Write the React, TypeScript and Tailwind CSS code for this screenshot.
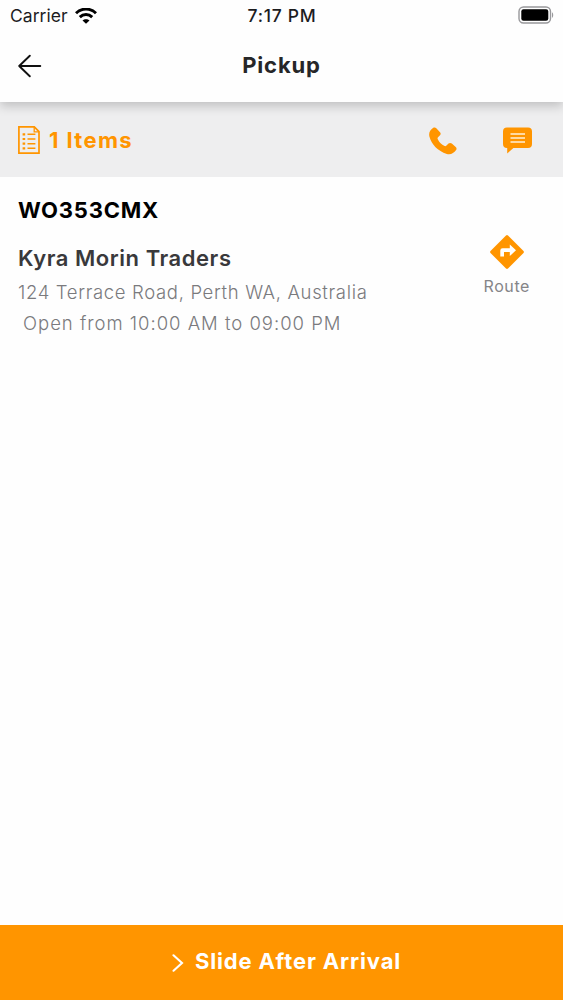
import React from "react"

function StatusBar() {
  return (
    <div className="grid grid-cols-3 items-center h-8 pl-[10px] pr-[9px] text-[17.5px] leading-8 text-[#1c1c1e]">
      <div className="flex items-center gap-[7px]">
        <span className="tracking-[0.05px]">Carrier</span>
        <svg className="w-[22px] h-4" viewBox="0 0 22 16" fill="none" stroke="#000" strokeWidth="3">
          <path d="M1 5.3C6.6 -0.3 15.4 -0.3 21 5.3" />
          <path d="M4.8 9.1C8.4 5.7 13.6 5.7 17.2 9.1" />
          <path d="M11 15.8L7.5 12.5C9.4 10.7 12.6 10.7 14.5 12.5Z" fill="#000" stroke="none" />
        </svg>
      </div>
      <span className="text-center font-medium tracking-[0.7px]">7:17 PM</span>
      <svg className="justify-self-end w-9 h-[18px] mt-[-2px]" viewBox="0 0 36 18">
        <rect x="1" y="1" width="31.5" height="16" rx="4.5" fill="#fff" stroke="#98989b" strokeWidth="1.4" />
        <rect x="3.3" y="3.3" width="27" height="11.4" rx="2.2" fill="#000" />
        <path d="M34 6.2C35.6 7 35.6 11 34 11.8Z" fill="#98989b" />
      </svg>
    </div>
  )
}

function Header() {
  return (
    <header className="relative z-10 bg-[#fefefe] h-[102px] shadow-[0_4px_10px_rgba(0,0,0,0.2)]">
      <StatusBar />
      <div className="grid grid-cols-3 items-center h-[68px] px-[18px]">
        <svg className="w-6 h-6" viewBox="0 0 24 24" fill="none" stroke="#111" strokeWidth="1.9" strokeLinecap="round" strokeLinejoin="round">
          <path d="M22.3 12H1.2M11.8 1.7L1.2 12L11.8 22.3" />
        </svg>
        <h1 className="-mt-0.5 text-center text-[22px] font-bold tracking-[0.85px] text-[#262628]">Pickup</h1>
      </div>
    </header>
  )
}

function ItemsBar() {
  return (
    <div className="flex items-center h-[75px] bg-[#eeeeef] pl-[18px] pr-[31px] text-[#ff9500]">
      <svg className="w-[22px] h-7 mt-px" viewBox="0 0 22 28" fill="none" stroke="currentColor" strokeWidth="1.7">
        <path d="M.9 .9H16.3L21 5.6V27.1H.9Z" />
        <path d="M16.2 1V5.8H21" strokeWidth="1.3" />
        <path d="M4.6 8.3H7.2M4.6 13H7.2M4.6 17.7H7.2M4.6 22.3H7.2" strokeWidth="2.2" />
        <path d="M9.5 8.3H17.4M9.5 13H17.4M9.5 17.7H17.4M9.5 22.3H17.4" strokeWidth="1.5" />
      </svg>
      <span className="ml-[9px] mt-0.5 text-[22px] font-bold tracking-[1.35px]">1 Items</span>
      <svg className="ml-auto w-7 h-7 mt-[3px]" viewBox="0 0 28 28" fill="currentColor">
        <path d="M4.3 .8C5.3 .2 6.5 .3 7.3 1.2L11 5.2C11.9 6.2 11.9 7.4 11 8.3L9 10.2C8.5 10.8 8.4 11.6 8.8 12.3C10.3 15.4 12.5 17.6 15.6 19C16.3 19.3 17 19.1 17.5 18.6L19.5 16.6C20.5 15.7 21.8 15.7 22.8 16.6L26.7 20C27.7 20.9 27.8 22 27.1 23C24.8 26.3 21.5 28 17.8 26.9C8.8 24 2.6 17.6 .4 9.5C-.4 6 .9 2.9 4.3 .8Z" />
      </svg>
      <svg className="ml-[46px] w-[29px] h-[27px] mt-0.5" viewBox="0 0 29 27">
        <path d="M4 .5H25Q29 .5 29 4.5V17Q29 21 25 21H10.4L4.2 26.5V21H4Q0 21 0 17V4.5Q0 .5 4 .5Z" fill="currentColor" />
        <path d="M7.5 7H22M7.5 11H22M7.5 15H22" stroke="#fff0d8" strokeWidth="1.7" />
      </svg>
    </div>
  )
}

function PickupDetails() {
  return (
    <main className="flex flex-1 justify-between pl-[18px] pr-[33px] pt-[18px]">
      <div className="whitespace-nowrap">
        <h2 className="text-[22px] leading-[30px] font-bold tracking-[0.8px] text-black">WO353CMX</h2>
        <h3 className="mt-[18px] text-[22px] leading-[30px] font-semibold tracking-[0.55px] text-[#39393b]">Kyra Morin Traders</h3>
        <p className="mt-1 text-[18.5px] leading-[30px] font-light tracking-[0.66px] text-[#7a7a7d]">124 Terrace Road, Perth WA, Australia</p>
        <p className="mt-px ml-[5px] text-[18.5px] leading-[30px] font-light tracking-[0.98px] text-[#7a7a7d]">Open from 10:00 AM to 09:00 PM</p>
      </div>
      <div className="flex flex-col items-center pt-10">
        <svg className="w-[34px] h-[34px]" viewBox="0 0 34 34">
          <path d="M16 .5Q17 -.3 18 .5L33.5 16Q34.3 17 33.5 18L18 33.5Q17 34.3 16 33.5L.5 18Q-.3 17 .5 16Z" fill="#ff9500" />
          <path d="M10.3 21.6V15.5Q10.3 13.2 12.6 13.2H19.8V9.5L26 15.3L19.8 21.1V17H14V21.6Z" fill="#fff" />
        </svg>
        <span className="mt-[5px] text-[16px] leading-6 tracking-[0.6px] text-[#858588]">Route</span>
      </div>
    </main>
  )
}

export default function App() {
  return (
    <div className="flex flex-col w-full h-[1000px] overflow-hidden bg-[#fefefe] font-['Inter','Liberation_Sans',sans-serif]">
      <Header />
      <ItemsBar />
      <PickupDetails />
      <button className="flex items-center justify-center h-[75px] w-full pl-[10px] bg-[#ff9500] text-white">
        <svg className="w-3 h-[18px]" viewBox="0 0 12 18" fill="none" stroke="currentColor" strokeWidth="2.1" strokeLinecap="round">
          <path d="M1.5 1.3L10 9L1.5 16.7" />
        </svg>
        <span className="ml-[11px] -mt-0.5 text-[22px] font-bold tracking-[0.85px]">Slide After Arrival</span>
      </button>
    </div>
  )
}
